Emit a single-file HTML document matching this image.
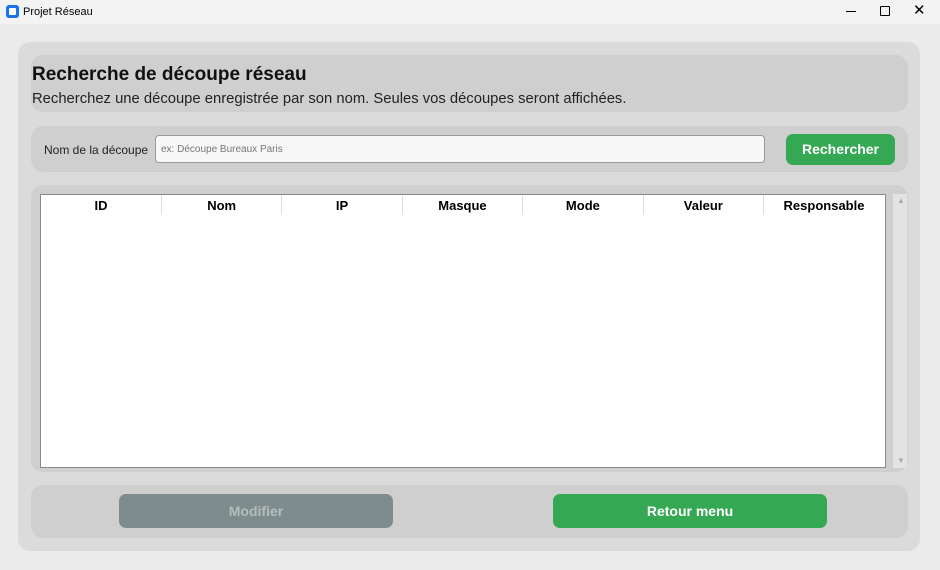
<!DOCTYPE html>
<html><head><meta charset="utf-8"><style>
*{box-sizing:border-box;margin:0;padding:0}
body{width:940px;height:570px;background:#ebebeb;font-family:"Liberation Sans","DejaVu Sans",sans-serif;position:relative;overflow:hidden}
.tb{position:absolute;left:0;top:0;width:940px;height:24px;background:#f3f3f3;font-size:11px;color:#000}
.tb .ic{position:absolute;left:6px;top:5px;width:13px;height:13px;border-radius:3px;background:#1a73e8}
.tb .ic:after{content:"";position:absolute;left:3px;top:3px;width:7px;height:7px;background:#fff;border-radius:1px}
.tb .t{position:absolute;left:23px;top:6px}
.abs{position:absolute}
.outer{left:18px;top:42px;width:902px;height:509px;background:#dbdbdb;border-radius:12px}
.sec{background:#cfcfcf;border-radius:12px}
.btn{border-radius:7px;color:#fff;font-weight:bold;font-size:14px;text-align:center}
th{font-size:13px;font-weight:bold;height:20px;border-right:1px solid #ddd}
</style></head><body>
<div class="tb"><div class="ic"></div><div class="t">Projet Réseau</div>
<div class="abs" style="left:846px;top:11px;width:10px;height:1px;background:#000"></div>
<div class="abs" style="left:880px;top:6px;width:10px;height:10px;border:1px solid #000;border-radius:1px"></div>
<div class="abs" style="left:913px;top:1px;font-size:15px">✕</div>
</div>
<div class="abs outer"></div>
<div class="abs sec" style="left:31px;top:55px;width:877px;height:57px"></div>
<div class="abs" style="left:32px;top:64px;font-size:19px;font-weight:bold;color:#111">Recherche de découpe réseau</div>
<div class="abs" style="left:32px;top:91px;font-size:14.8px;color:#222">Recherchez une découpe enregistrée par son nom. Seules vos découpes seront affichées.</div>
<div class="abs sec" style="left:31px;top:126px;width:877px;height:46px"></div>
<div class="abs" style="left:44px;top:143px;font-size:12px;color:#222">Nom de la découpe</div>
<div class="abs" style="left:155px;top:135px;width:610px;height:28px;background:#f7f7f7;border:1px solid #999;border-radius:4px;font-size:10px;color:#777;padding:8px 5px">ex: Découpe Bureaux Paris</div>
<div class="abs btn" style="left:786px;top:134px;width:109px;height:31px;background:#34a853;line-height:31px">Rechercher</div>
<div class="abs sec" style="left:31px;top:185px;width:877px;height:287px"></div>
<div class="abs" style="left:40px;top:194px;width:846px;height:274px;background:#fff;border:1px solid #8a8a8a">
<table style="width:843px;border-collapse:collapse;table-layout:fixed"><tr><th>ID</th><th>Nom</th><th>IP</th><th>Masque</th><th>Mode</th><th>Valeur</th><th style="border:0">Responsable</th></tr></table></div>
<div class="abs" style="left:893px;top:194px;width:14px;height:274px;background:#e3e3e3"></div>
<div class="abs" style="left:897px;top:196px;font-size:8px;color:#aaa">▲</div>
<div class="abs" style="left:897px;top:456px;font-size:8px;color:#aaa">▼</div>
<div class="abs sec" style="left:31px;top:485px;width:877px;height:53px"></div>
<div class="abs btn" style="left:119px;top:494px;width:274px;height:34px;background:#7f8c8d;line-height:34px;color:#b5bcbc">Modifier</div>
<div class="abs btn" style="left:553px;top:494px;width:274px;height:34px;background:#34a853;line-height:34px">Retour menu</div>
</body></html>
